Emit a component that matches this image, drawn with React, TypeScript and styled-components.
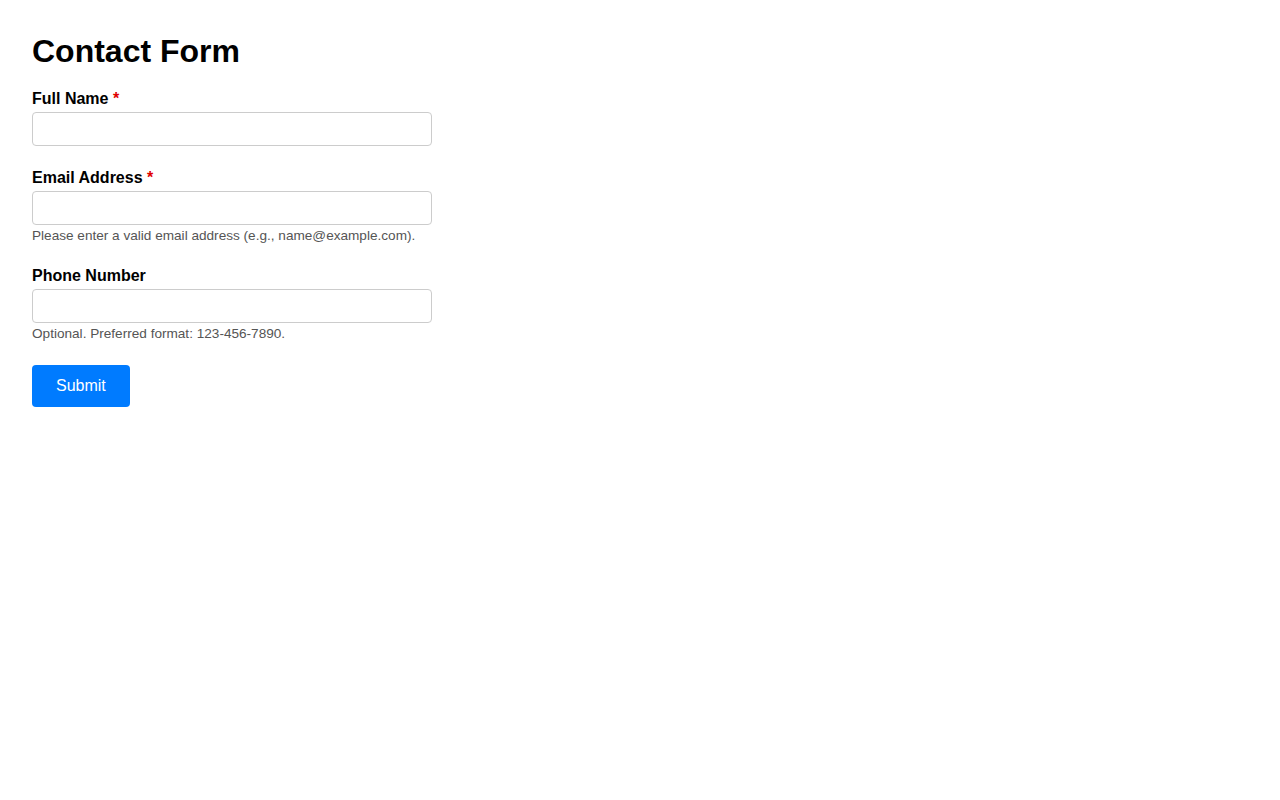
import React from "react";
import styled, { createGlobalStyle } from "styled-components";

const GlobalStyle = createGlobalStyle`
  html, body {
    margin: 0;
    padding: 0;
    background: #ffffff;
  }
  body {
    font-family: "Liberation Sans", Arial, Helvetica, sans-serif;
    color: #000;
  }
  * { box-sizing: border-box; }
`;

const Page = styled.div`
  padding: 33px 32px 32px;
`;

const Title = styled.h1`
  margin: 0 0 19px;
  font-size: 32px;
  font-weight: 700;
  line-height: 37px;
`;

const Form = styled.form`
  display: flex;
  flex-direction: column;
  width: 400px;
`;

const Group = styled.div`
  display: flex;
  flex-direction: column;
  margin-bottom: 22px;
`;

const Label = styled.label`
  font-size: 16px;
  font-weight: 700;
  line-height: 19px;
  margin-bottom: 4px;
`;

const Required = styled.span`
  color: #e00000;
`;

const Input = styled.input`
  width: 400px;
  height: 34px;
  padding: 8px;
  font-size: 14px;
  font-family: inherit;
  border: 1px solid #cccccc;
  border-radius: 4px;
  outline: none;
  background: #fff;
`;

const Help = styled.small`
  display: block;
  margin-top: 3px;
  font-size: 13.6px;
  line-height: 16px;
  color: #555555;
`;

const Actions = styled.div`
  margin-top: 1px;
`;

const SubmitButton = styled.button`
  padding: 12px 24px;
  font-family: inherit;
  font-size: 16px;
  line-height: 18px;
  color: #ffffff;
  background: #007bff;
  border: none;
  border-radius: 4px;
  cursor: pointer;
`;

export default function App() {
  return (
    <>
      <GlobalStyle />
      <Page>
        <Title>Contact Form</Title>
        <Form onSubmit={(e) => e.preventDefault()}>
          <Group>
            <Label htmlFor="name">
              Full Name <Required>*</Required>
            </Label>
            <Input id="name" type="text" />
          </Group>
          <Group>
            <Label htmlFor="email">
              Email Address <Required>*</Required>
            </Label>
            <Input id="email" type="email" />
            <Help>Please enter a valid email address (e.g., name@example.com).</Help>
          </Group>
          <Group>
            <Label htmlFor="phone">Phone Number</Label>
            <Input id="phone" type="tel" />
            <Help>Optional. Preferred format: 123-456-7890.</Help>
          </Group>
          <Actions>
            <SubmitButton type="submit">Submit</SubmitButton>
          </Actions>
        </Form>
      </Page>
    </>
  );
}
